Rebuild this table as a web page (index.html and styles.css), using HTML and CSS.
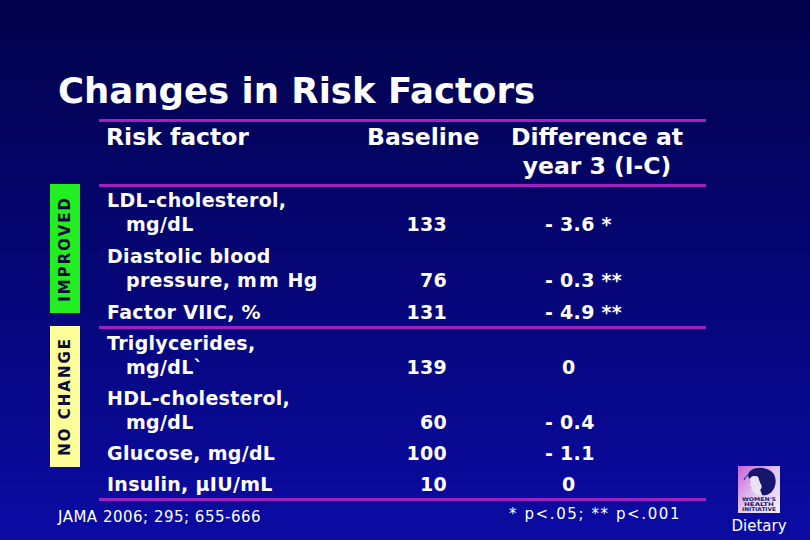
FILE: index.html
```html
<!DOCTYPE html>
<html>
<head>
<meta charset="utf-8">
<link rel="stylesheet" href="styles.css">
</head>
<body>
<div class="slide">
  <h1 class="title">Changes in Risk Factors</h1>

  <div class="head">
    <div class="c1">Risk factor</div>
    <div class="c2">Baseline</div>
    <div class="c3">Difference at<br>year 3 (I-C)</div>
  </div>

  <div class="group improved">
    <div class="label"><span>IMPROVED</span></div>
    <div class="rows">
      <div class="row"><div class="factor">LDL-cholesterol,<br>mg/dL</div><div class="base">133</div><div class="diff">- 3.6 *</div></div>
      <div class="row"><div class="factor">Diastolic blood<br>pressure, <span class="mm">mm</span> Hg</div><div class="base">76</div><div class="diff">- 0.3 **</div></div>
      <div class="row"><div class="factor">Factor VIIC, %</div><div class="base">131</div><div class="diff">- 4.9 **</div></div>
    </div>
  </div>

  <div class="group nochange">
    <div class="label"><span>NO CHANGE</span></div>
    <div class="rows">
      <div class="row"><div class="factor">Triglycerides,<br>mg/dL`</div><div class="base">139</div><div class="diff zero">0</div></div>
      <div class="row"><div class="factor">HDL-cholesterol,<br>mg/dL</div><div class="base">60</div><div class="diff">- 0.4</div></div>
      <div class="row"><div class="factor">Glucose, mg/dL</div><div class="base">100</div><div class="diff">- 1.1</div></div>
      <div class="row"><div class="factor">Insulin, µIU/mL</div><div class="base">10</div><div class="diff zero">0</div></div>
    </div>
  </div>

  <div class="foot">
    <div class="source">JAMA 2006; 295; 655-666</div>
    <div class="note">* p&lt;.05; ** p&lt;.001</div>
  </div>

  <div class="badge">
    <svg class="logo" width="42" height="47" viewBox="0 0 42 47">
      <defs>
        <linearGradient id="lg" x1="0" y1="0" x2="1" y2="1">
          <stop offset="0" stop-color="#c860d8"/>
          <stop offset="0.5" stop-color="#e0c8f0"/>
          <stop offset="1" stop-color="#f4eefc"/>
        </linearGradient>
      </defs>
      <rect width="42" height="47" fill="url(#lg)"/>
      <path d="M12 5 C18 0 30 1 35 7 C39 12 38 20 35 24 C33 28 28 30 24 29 L22 24 C24 22 24 19 22 17 L20 11 C17 9 13 10 12 13 C10 12 9 8 12 5 Z" fill="#16166e"/>
      <path d="M12 13 C13 10 17 9 20 11 L22 17 C24 19 24 22 22 24 L24 29 C20 30 16 28 15 25 L13 24 L14 21 L12 19 L13 17 Z" fill="#e8e4f4"/>
      <path d="M6 14 C7 11 9 9 12 8" stroke="#16166e" stroke-width="1" fill="none"/>
      <text x="21" y="35" class="lt" text-anchor="middle" textLength="34" lengthAdjust="spacingAndGlyphs">WOMEN'S</text>
      <text x="21" y="40" class="lt" text-anchor="middle" textLength="30" lengthAdjust="spacingAndGlyphs">HEALTH</text>
      <text x="21" y="45" class="lt" text-anchor="middle" textLength="34" lengthAdjust="spacingAndGlyphs">INITIATIVE</text>
    </svg>
    <div class="dietary">Dietary</div>
  </div>
</div>
</body>
</html>
```

FILE: styles.css
```css
body {
  margin: 0;
}

.slide {
  position: relative;
  width: 810px;
  height: 540px;
  overflow: hidden;
  background: linear-gradient(180deg, #01014a 0%, #06067a 55%, #0b0ba4 100%);
  color: #ffffff;
  font-family: "DejaVu Sans", Verdana, sans-serif;
}

.title {
  margin: 0;
  padding: 71px 0 0 58px;
  font-size: 35.5px;
  line-height: 40px;
  font-weight: bold;
}

.head,
.rows {
  width: 607px;
  border-top: 3px solid #a21fc2;
}

.head {
  margin: 8px 0 0 99px;
  padding: 1px 0 3px;
  display: grid;
  grid-template-columns: 261px 140px 206px;
  font-size: 23.5px;
  line-height: 29px;
  font-weight: bold;
}

.head .c1,
.head .c2 {
  padding-left: 7px;
}

.head .c3 {
  text-align: center;
  padding-right: 12px;
}

.group {
  display: flex;
  align-items: flex-start;
}

.label {
  margin-left: 50px;
  width: 30px;
  display: flex;
  align-items: center;
  justify-content: center;
}

.label span {
  writing-mode: vertical-rl;
  transform: rotate(180deg);
  font-size: 15px;
  font-weight: bold;
  letter-spacing: 2px;
  line-height: 30px;
  color: #0b0b3a;
}

.improved .label {
  background: #22ee22;
  height: 129px;
}

.nochange .label {
  background: #ffff99;
  height: 141px;
}

.rows {
  margin-left: 19px;
  display: flex;
  flex-direction: column;
}

.improved .rows {
  padding: 1px 0 2px;
  gap: 8px;
}

.nochange .rows {
  padding: 2px 0 2px;
  gap: 7px;
  border-bottom: 3px solid #a21fc2;
}

.row {
  display: grid;
  grid-template-columns: 261px 140px 206px;
  font-size: 19px;
  line-height: 24px;
  font-weight: bold;
  letter-spacing: 0.3px;
}

.factor {
  padding-left: 27px;
  text-indent: -19px;
  white-space: nowrap;
}

.mm {
  letter-spacing: 2px;
}

.base {
  align-self: end;
  text-align: right;
  padding-right: 53px;
}

.diff {
  align-self: end;
  padding-left: 45px;
  white-space: pre;
}

.diff.zero {
  padding-left: 62px;
}

.foot {
  display: flex;
  align-items: flex-start;
  padding-left: 58px;
  margin-top: 7px;
  font-size: 15px;
  line-height: 18px;
}

.source {
  width: 451px;
  letter-spacing: 0.5px;
}

.note {
  margin-top: -3px;
  letter-spacing: 1.6px;
}

.badge {
  position: absolute;
  left: 730px;
  top: 466px;
  width: 58px;
  display: flex;
  flex-direction: column;
  align-items: center;
  gap: 4px;
}

.logo {
  display: block;
}

.lt {
  font-family: "DejaVu Sans", sans-serif;
  font-size: 5px;
  font-weight: bold;
  fill: #1a1a70;
}

.dietary {
  font-size: 15px;
  line-height: 18px;
}
```
